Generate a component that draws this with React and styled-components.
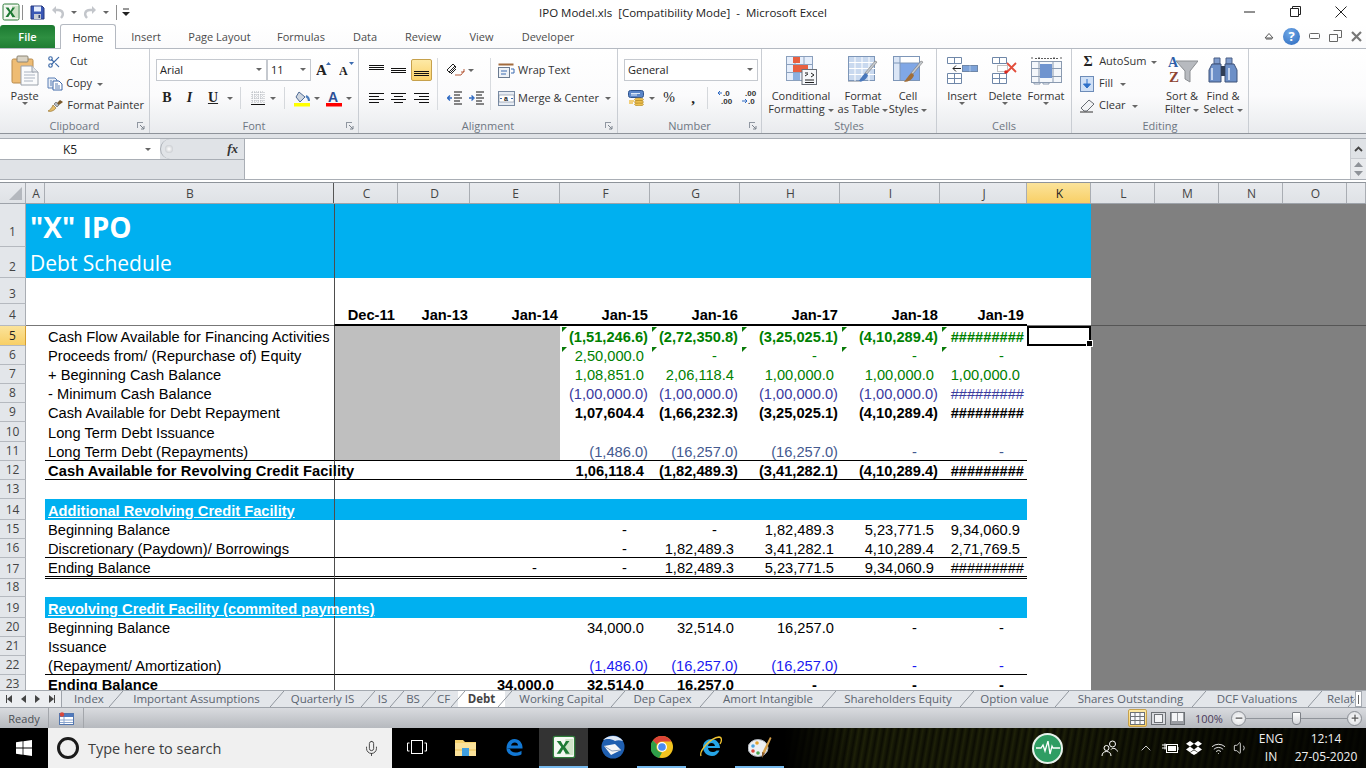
import React from 'react';
import styled, { createGlobalStyle } from 'styled-components';
import { Scissors, Mic, Volume1, Wifi, ChevronUp, Minus, Plus } from 'lucide-react';

const GlobalStyle = createGlobalStyle`
  html, body { margin: 0; padding: 0; background: #fff; }
  * { box-sizing: border-box; }
  svg { display: block; flex-shrink: 0; }
`;

const uiFont = `"Open Sans", "Noto Sans", sans-serif`;
const cellFont = `"Liberation Sans", Arial, sans-serif`;

const Page = styled.div`
  width: 1366px;
  height: 768px;
  overflow: hidden;
  display: flex;
  flex-direction: column;
  font-family: ${uiFont};
  font-size: 11px;
  color: #3c3c3c;
`;

/* title bar */
const TitleBar = styled.div`
  height: 24px;
  display: grid;
  grid-template-columns: 1fr auto 1fr;
  align-items: center;
  background: #fff;
`;
const Qat = styled.div`
  display: flex;
  align-items: center;
  padding-left: 2px;
`;
const QatSep = styled.div`
  width: 1px;
  height: 15px;
  background: #8e8e8e;
  margin: 0 ${({ $r }) => $r}px 0 ${({ $l }) => $l}px;
`;
const TitleText = styled.div`
  font-size: 11.5px;
  color: #222;
  white-space: pre;
`;
const WindowBtns = styled.div`
  display: flex;
  justify-content: flex-end;
  padding-right: 2px;
  color: #222;
`;
const WindowBtn = styled.div`
  width: 46px;
  display: flex;
  justify-content: center;
`;

/* ribbon tabs */
const TabRow = styled.div`
  height: 25px;
  display: flex;
  align-items: flex-end;
  background: linear-gradient(#fff, #fbfbfc);
  border-bottom: 1px solid #b4b9c1;
`;
const FileTab = styled.div`
  width: 55px;
  height: 23px;
  border-radius: 3px 3px 0 0;
  background: linear-gradient(#1c7a31, #2e8f41 55%, #1f7d33);
  color: #fff;
  font-weight: 600;
  display: flex;
  align-items: center;
  justify-content: center;
  margin-right: 5px;
`;
const RibbonTab = styled.div`
  height: 25px;
  width: ${({ $w }) => $w}px;
  display: flex;
  align-items: center;
  justify-content: center;
  color: ${({ $on }) => ($on ? '#333' : '#4c4c4c')};
  background: ${({ $on }) => ($on ? '#fff' : 'transparent')};
  border: 1px solid ${({ $on }) => ($on ? '#b4b9c1' : 'transparent')};
  border-bottom: 0;
  border-radius: 3px 3px 0 0;
  margin-bottom: ${({ $on }) => ($on ? '-1px' : '0')};
`;
const TabRight = styled.div`
  margin-left: auto;
  height: 24px;
  display: flex;
  align-items: center;
  gap: 9px;
  padding-right: 4px;
  color: #5a6169;
`;
const HelpDot = styled.div`
  width: 17px;
  height: 17px;
  border-radius: 50%;
  background: radial-gradient(circle at 40% 30%, #6fa7e6, #2a68bd);
  color: #fff;
  font-weight: 700;
  font-size: 13px;
  line-height: 17px;
  text-align: center;
`;

/* ribbon */
const Ribbon = styled.div`
  height: 85px;
  display: flex;
  background: linear-gradient(#ffffff, #fbfbfc 55%, #e9ebee);
  border-bottom: 1px solid #8e939a;
`;
const Group = styled.div`
  position: relative;
  width: ${({ $w }) => $w}px;
  border-right: 1px solid #c9cdd3;
  display: flex;
  flex-direction: column;
`;
const GroupBody = styled.div`
  height: 69px;
  display: flex;
  padding-left: ${({ $pl }) => $pl || 0}px;
`;
const GroupLabel = styled.div`
  height: 15px;
  line-height: 15px;
  text-align: center;
  color: #6d7682;
`;
const Launcher = styled.div`
  position: absolute;
  right: 4px;
  bottom: 3px;
`;
const BigBtn = styled.div`
  width: ${({ $w }) => $w}px;
  display: flex;
  flex-direction: column;
  align-items: center;
  padding-top: 4px;
  line-height: 13px;
  text-align: center;
  color: #333;
  white-space: nowrap;
`;
const BigIcon = styled.div`
  height: 34px;
  display: flex;
  align-items: center;
  justify-content: center;
  margin-bottom: 2px;
`;
const SmallCol = styled.div`
  width: ${({ $w }) => $w}px;
  margin-left: ${({ $ml }) => $ml || 0}px;
  padding-top: 2px;
  display: flex;
  flex-direction: column;
`;
const SmallBtn = styled.div`
  height: 22px;
  display: flex;
  align-items: center;
  gap: ${({ $gap }) => $gap ?? 4}px;
  color: #333;
  white-space: nowrap;
  line-height: 20px;
`;
const BtnText = styled.span`
  position: relative;
  top: -1px;
`;
const Caret = styled.span`
  display: inline-block;
  width: 0;
  height: 0;
  border-left: 3px solid transparent;
  border-right: 3px solid transparent;
  border-top: 3px solid #666;
  margin-left: ${({ $ml }) => $ml || 0}px;
  vertical-align: middle;
`;
const CaretBox = styled.div`
  width: ${({ $w }) => $w || 8}px;
  display: flex;
  justify-content: center;
`;
const Stack = styled.div`
  padding-top: 9px;
  display: flex;
  flex-direction: column;
  gap: 4px;
`;
const ToolRow = styled.div`
  height: 24px;
  display: flex;
  align-items: center;
`;
const Tool = styled.div`
  width: ${({ $w }) => $w}px;
  height: 22px;
  margin-left: ${({ $ml }) => $ml || 0}px;
  display: flex;
  align-items: center;
  justify-content: center;
  color: #222;
  border-radius: 2px;
  ${({ $on }) => $on && `
    border: 1px solid #c6a14c;
    background: linear-gradient(#fde9a6, #fbd26a);
  `}
`;
const Letter = styled.span`
  font-family: "Liberation Serif", serif;
  font-size: ${({ $s }) => $s || 13}px;
  font-weight: ${({ $b }) => ($b ? 700 : 400)};
  font-style: ${({ $i }) => ($i ? 'italic' : 'normal')};
  text-decoration: ${({ $u }) => ($u ? 'underline' : 'none')};
  color: #222;
`;
const RowSep = styled.div`
  width: 1px;
  height: 22px;
  background: #d5d8dc;
  margin: 0 ${({ $r }) => $r || 0}px 0 ${({ $l }) => $l || 0}px;
`;
const FullSep = styled.div`
  width: 1px;
  height: 52px;
  margin: 9px ${({ $r }) => $r || 0}px 0 ${({ $l }) => $l || 0}px;
  background: #d8dbdf;
`;
const Select = styled.div`
  width: ${({ $w }) => $w}px;
  height: 22px;
  border: 1px solid #c5c9cf;
  background: #fff;
  display: flex;
  align-items: center;
  justify-content: space-between;
  padding: 0 4px 2px 3px;
  color: #222;
`;
const TextBtn = styled.div`
  display: flex;
  align-items: center;
  gap: 3px;
  color: #333;
  white-space: nowrap;
`;

const RibbonGap = styled.div`
  height: 4px;
  background: #dfe2e6;
`;

/* formula bar */
const FormulaBar = styled.div`
  height: 45px;
  display: flex;
  flex-direction: column;
  border-top: 1px solid #a9aeb5;
  background: #fff;
`;
const FormulaMain = styled.div`
  height: 40px;
  display: flex;
`;
const NamePanel = styled.div`
  width: 245px;
  border-right: 1px solid #a9aeb5;
  display: flex;
  flex-direction: column;
  background: #e0e3e7;
`;
const NameTop = styled.div`
  height: 21px;
  display: flex;
  border-bottom: 1px solid #a9aeb5;
`;
const NameBox = styled.div`
  width: 160px;
  background: #fff;
  display: flex;
  align-items: center;
  font-size: 12px;
  color: #222;
  padding: 0 9px 0 63px;
  justify-content: space-between;
`;
const Grip = styled.div`
  flex: 1;
  display: flex;
  align-items: center;
  justify-content: space-between;
  padding: 0 6px 0 4px;
  border-left: 1px solid #a9aeb5;
  border-radius: 10px 0 0 10px;
  font-family: "Liberation Serif", serif;
  font-style: italic;
  font-weight: 700;
  font-size: 13px;
  color: #333;
`;
const GripDot = styled.div`
  width: 8px;
  height: 8px;
  border-radius: 50%;
  background: radial-gradient(#fff, #b8bcc2);
`;
const FormulaInput = styled.div`
  flex: 1;
  background: #fff;
`;
const FormulaScroll = styled.div`
  width: 16px;
  display: flex;
  flex-direction: column;
  border-left: 1px solid #c9ccd1;
  background: #e8eaed;
`;
const ScrollTop = styled.div`
  height: 20px;
  display: flex;
  align-items: center;
  justify-content: center;
  background: #dfe2e6;
  border-bottom: 1px solid #c9ccd1;
`;
const ScrollPair = styled.div`
  flex: 1;
  display: flex;
  flex-direction: column;
  align-items: center;
  justify-content: center;
  gap: 4px;
`;
const FormulaEdge = styled.div`
  height: 4px;
  border-top: 1px solid #a9aeb5;
  border-bottom: 1px solid #8e939a;
  background: #fff;
`;

/* column headers */
const ColHeaders = styled.div`
  height: 21px;
  display: flex;
  border-bottom: 1px solid #9ea3aa;
`;
const ColHead = styled.div`
  width: ${({ $w }) => $w}px;
  ${({ $fill }) => $fill && 'flex: 1;'}
  height: 100%;
  display: flex;
  align-items: center;
  justify-content: center;
  padding-left: 2px;
  font-size: 12px;
  color: ${({ $on }) => ($on ? '#222' : '#444')};
  background: ${({ $on }) => ($on ? 'linear-gradient(#fbe39a, #f8cf66)' : 'linear-gradient(#e8eaee, #dfe2e6)')};
  border-right: 1px solid ${({ $dark }) => ($dark ? '#555' : '#a9adb3')};
`;
const Corner = styled(ColHead)`
  justify-content: flex-end;
  align-items: flex-end;
  padding: 0 3px 3px 0;
`;

/* sheet */
const Sheet = styled.div`
  height: 486px;
  overflow: hidden;
`;
const SheetRow = styled.div`
  height: ${({ $h }) => $h}px;
  display: flex;
`;
const RowHead = styled.div`
  width: 26px;
  display: flex;
  align-items: flex-end;
  justify-content: center;
  padding-bottom: ${({ $pb }) => $pb ?? 2}px;
  font-size: 12px;
  line-height: 15px;
  color: ${({ $on }) => ($on ? '#222' : '#444')};
  background: ${({ $on }) => ($on ? 'linear-gradient(#fbe39a, #f8cf66)' : '#e3e6ea')};
  border-right: 1px solid ${({ $on }) => ($on ? '#d59d2f' : '#a9adb3')};
  border-bottom: 1px solid #b5b9bf;
`;
const Cell = styled.div`
  position: relative;
  width: ${({ $w }) => $w}px;
  display: flex;
  align-items: flex-end;
  justify-content: ${({ $left }) => ($left ? 'flex-start' : 'flex-end')};
  padding: 0 ${({ $pr }) => $pr || 0}px ${({ $pb }) => $pb ?? 1}px ${({ $pl }) => $pl || 0}px;
  white-space: nowrap;
  font-family: ${cellFont};
  font-size: 14.67px;
  line-height: 16px;
  letter-spacing: ${({ $ls }) => $ls || 0}px;
  font-weight: ${({ $b }) => ($b ? 700 : 400)};
  color: ${({ $c }) => $c || '#000'};
  background: ${({ $bg }) => $bg || 'transparent'};
  border-left: ${({ $freeze }) => ($freeze ? '1px solid #4d4d4d' : '0')};
  border-bottom: ${({ $line }) => $line || '0'};
  z-index: ${({ $over }) => ($over ? 1 : 0)};
  ${({ $sel }) => $sel && `
    border: 2px solid #000;
    &::after {
      content: '';
      position: absolute;
      right: -4px;
      bottom: -3px;
      width: 5px;
      height: 5px;
      background: #000;
      border: 1px solid #fff;
    }
  `}
  ${({ $flag }) => $flag && `
    &::before {
      content: '';
      position: absolute;
      left: 2px;
      top: 1px;
      border-top: 5px solid #0a7a0a;
      border-right: 5px solid transparent;
    }
  `}
`;
const BlueTitle = styled.div`
  font-family: ${uiFont};
  color: #fff;
  font-size: ${({ $s }) => $s}px;
  font-weight: ${({ $b }) => ($b ? 700 : 400)};
  line-height: 1;
  padding-left: ${({ $pl }) => $pl}px;
  padding-bottom: ${({ $pb }) => $pb}px;
`;
const BarTitle = styled.span`
  color: #fff;
  font-weight: 700;
  text-decoration: underline;
`;
const DeadArea = styled.div`
  flex: 1;
  background: #808080;
  border-bottom: ${({ $line }) => $line || '0'};
`;

/* sheet tabs */
const SheetTabs = styled.div`
  height: 18px;
  display: flex;
  overflow: hidden;
  border-top: 1px solid #a4a9b0;
  border-bottom: 1px solid #9ea3aa;
  background: #e3e6ea;
`;
const TabNav = styled.div`
  width: 62px;
  display: flex;
  align-items: center;
  justify-content: space-around;
  padding: 0 2px;
  border-right: 1px solid #9ea3aa;
  background: #eceef1;
`;
const NavArrow = styled.div`
  width: 0;
  height: 0;
  border-top: 4px solid transparent;
  border-bottom: 4px solid transparent;
  ${({ $right }) => ($right ? 'border-left: 5px solid #444;' : 'border-right: 5px solid #444;')}
`;
const NavEnd = styled(NavArrow)`
  ${({ $right }) => ($right
    ? 'box-shadow: 1px 0 0 0 #444;'
    : 'box-shadow: -1px 0 0 0 #444;')}
`;
const SheetTab = styled.div`
  position: relative;
  width: ${({ $w }) => $w}px;
  display: flex;
  align-items: center;
  justify-content: ${({ $pl }) => ($pl ? 'flex-start' : 'center')};
  padding: 0 0 2px ${({ $pl }) => $pl || 0}px;
  white-space: nowrap;
  font-size: 11.5px;
  font-weight: ${({ $on }) => ($on ? 700 : 400)};
  color: ${({ $on }) => ($on ? '#444' : '#5b6470')};
  background: ${({ $on }) => ($on ? '#fff' : 'transparent')};
  &::after {
    content: '';
    position: absolute;
    right: -7px;
    top: 0;
    bottom: 0;
    width: 14px;
    z-index: 1;
    background: linear-gradient(to top left, transparent calc(50% - 0.7px), #8b9199, transparent calc(50% + 0.7px));
  }
`;
const TabEnd = styled.div`
  width: 7px;
  background: #fff;
  border: 1px solid #a4a9b0;
  display: flex;
  align-items: center;
  justify-content: center;
  z-index: 2;
  &::before {
    content: '';
    width: 1px;
    height: 9px;
    background: #666;
  }
`;
const TabRest = styled.div`
  flex: 1;
  background: #d8dbe0;
`;

/* status bar */
const StatusBar = styled.div`
  height: 20px;
  display: flex;
  align-items: center;
  background: linear-gradient(#d9dbdf, #b6b9be);
  color: #4b4f55;
  font-size: 11px;
`;
const StatusItem = styled.div`
  height: 100%;
  width: ${({ $w }) => $w}px;
  display: flex;
  align-items: center;
  justify-content: center;
  border-right: 1px solid #a3a6ab;
`;
const StatusRight = styled.div`
  margin-left: auto;
  display: flex;
  align-items: center;
  height: 100%;
`;
const ViewBtn = styled.div`
  width: ${({ $w }) => $w}px;
  height: 18px;
  display: flex;
  align-items: center;
  justify-content: center;
  border-radius: 2px;
  ${({ $on }) => $on && `
    border: 1px solid #c6a14c;
    background: linear-gradient(#fde9a6, #fbd26a);
  `}
`;
const ZoomText = styled.div`
  width: 39px;
  margin-left: 7px;
  padding-left: 3px;
  color: #4a3a5a;
`;
const ZoomRound = styled.div`
  width: 15px;
  height: 15px;
  border-radius: 50%;
  border: 1px solid #8b8f95;
  background: radial-gradient(#fff, #d5d7db);
  display: flex;
  align-items: center;
  justify-content: center;
  color: #555;
`;
const ZoomTrack = styled.div`
  position: relative;
  width: 101px;
  height: 1px;
  background: #90949a;
`;
const ZoomThumb = styled.div`
  position: absolute;
  left: 46px;
  top: -6px;
  width: 9px;
  height: 13px;
  background: linear-gradient(#fff, #d4d6da);
  border: 1px solid #7d8187;
  border-radius: 1px 1px 4px 4px;
`;
const StatusEnd = styled.div`
  width: 4px;
`;

/* taskbar */
const Taskbar = styled.div`
  height: 40px;
  display: flex;
  align-items: center;
  color: #fff;
  background-color: #000;
  background-image:
    linear-gradient(90deg, #000, rgba(0, 0, 0, 0) 12%, rgba(0, 0, 0, 0) 45%, rgba(0, 0, 0, 0.55) 75%, rgba(0, 0, 0, 0.8)),
    repeating-linear-gradient(100deg, #0b0c03 0, #1e2108 3px, #0b0c03 7px);
  background-size: 581px 100%;
  background-position: right top;
  background-repeat: no-repeat;
`;
const StartBtn = styled.div`
  width: 48px;
  display: flex;
  justify-content: center;
`;
const SearchBox = styled.div`
  width: 344px;
  height: 40px;
  background: #f0f0f0;
  color: #2f2f2f;
  display: flex;
  align-items: center;
  padding: 0 12px 0 9px;
  font-size: 14.5px;
`;
const CortanaRing = styled.div`
  width: 22px;
  height: 22px;
  border-radius: 50%;
  border: 3px solid #1b1b1b;
  margin-right: 9px;
`;
const SearchText = styled.div`
  flex: 1;
  color: #3d3d3d;
`;
const TaskBtn = styled.div`
  width: ${({ $w }) => $w || 49}px;
  height: 40px;
  display: flex;
  align-items: center;
  justify-content: center;
  background: ${({ $on }) => ($on ? '#333' : 'transparent')};
  border-bottom: 2px solid ${({ $under }) => ($under ? '#76b9ed' : 'transparent')};
`;
const Tray = styled.div`
  margin-left: auto;
  display: flex;
  align-items: center;
  height: 40px;
`;
const TrayIcon = styled.div`
  width: ${({ $w }) => $w}px;
  display: flex;
  justify-content: center;
`;
const TrayText = styled.div`
  width: ${({ $w }) => $w}px;
  font-size: 12px;
  line-height: 18px;
  text-align: center;
  color: #f2f2f2;
`;
const PulseDot = styled.div`
  width: 31px;
  height: 31px;
  border-radius: 50%;
  background: #2f9d63;
  border: 2px solid #e8f3ec;
  display: flex;
  align-items: center;
  justify-content: center;
  margin: 0 35px 0 0;
`;

/* icons */
const Svg = ({ w, h, children }) => (
  <svg width={w} height={h} viewBox={`0 0 ${w} ${h}`} fill="none">{children}</svg>
);

const ExcelLogo = ({ s = 18 }) => (
  <svg width={s} height={s} viewBox="0 0 18 18" fill="none">
    <rect x="1" y="1" width="16" height="16" rx="1.5" fill="#f4f8f2" stroke="#2f7d3a" />
    <rect x="10" y="3" width="6" height="12" fill="#cfe3c8" />
    <path d="M3.5 4.5h3l2 3.4 2-3.4h2.6L9.8 9l3.5 5h-3L8.3 10.6 6.3 14H3.5l3.5-5z" fill="#1f7a35" />
  </svg>
);
const SaveIcon = () => (
  <Svg w={15} h={15}>
    <path d="M1 1h11l2 2v11H1z" fill="#3a58b5" stroke="#26397f" />
    <rect x="4" y="1.5" width="7" height="5" fill="#e6eefc" />
    <rect x="4" y="9" width="7" height="5" fill="#c8cdd6" />
    <rect x="8.5" y="10" width="1.6" height="3" fill="#36456e" />
  </Svg>
);
const UndoIcon = ({ flip }) => (
  <svg width="14" height="14" viewBox="0 0 14 14" fill="none" transform={flip ? 'scale(-1 1)' : undefined}>
    <path d="M10 13c3-3 2.5-8-3-8H4" stroke="#c3c6cb" strokeWidth="2.4" />
    <path d="M5 1 1 5l4 4z" fill="#c3c6cb" />
  </svg>
);
const ClipboardIcon = () => (
  <Svg w={28} h={31}>
    <rect x="1" y="4" width="21" height="24" rx="1.5" fill="#eebc74" stroke="#b88a4c" />
    <rect x="6" y="1" width="11" height="6" rx="1" fill="#d9d3c5" stroke="#8c8574" />
    <path d="M10 11h11l6 6v13H10z" fill="#fafbfc" stroke="#9aa1ab" />
    <path d="M13 17h10M13 20h11M13 23h11M13 26h9" stroke="#aab3c0" />
    <path d="M21 11v6h6" fill="#e3e7ec" stroke="#9aa1ab" />
  </Svg>
);
const CopyIcon = () => (
  <Svg w={16} h={14}>
    <path d="M1 1h7l2 2v8H1z" fill="#e9eff8" stroke="#5a7eb4" />
    <path d="M6 4h6l3 3v6H6z" fill="#fff" stroke="#3f68a8" />
    <path d="M8 7h3M8 9h5M8 11h5M3 4h2M3 6h2M3 8h2" stroke="#5a7eb4" />
  </Svg>
);
const PainterIcon = () => (
  <Svg w={17} h={14}>
    <path d="M1 12c2 1 6 0 8-3L6 6C5 9 3 11 1 12z" fill="#e6bd6b" stroke="#9a7631" strokeWidth=".7" />
    <path d="M7 5l3 3 2-2-3-3z" fill="#b3b8bf" stroke="#666" strokeWidth=".7" />
    <path d="M10 4l3-3 3 2-4 3z" fill="#7a5a2c" />
  </Svg>
);
const GrowA = ({ s, up }) => (
  <Svg w={16} h={18}>
    <text x="0" y="14" fontFamily="Liberation Serif" fontWeight="700" fontSize={s} fill="#222">A</text>
    <path d={up ? 'M10 4l2.5-3L15 4z' : 'M10 1l2.5 3L15 1z'} fill="#3b6bb0" />
  </Svg>
);
const Lines = ({ rows, c = '#111' }) => (
  <Svg w={15} h={15}>
    {rows.map(([x1, y, x2], i) => (
      <rect key={i} x={x1} y={y} width={x2 - x1} height="1" fill={c} />
    ))}
  </Svg>
);
const BorderIcon = () => (
  <Svg w={14} h={14}>
    <path d="M1 1h12v12M7 1v12M1 7h12M1 1v12M4 1v12M10 1v12M1 4h12M1 10h12" stroke="#b1b5bb" strokeDasharray="1 1" />
    <rect x="0" y="13" width="14" height="1" fill="#111" />
  </Svg>
);
const FillIcon = () => (
  <Svg w={17} h={17}>
    <path d="M5 2l6 5-5 5-4-5z" fill="#cfd6df" stroke="#4f6a94" />
    <path d="M12 6c2 1 3 3 3 5" stroke="#4a7bbb" strokeWidth="2" />
    <rect x="0" y="13" width="16" height="3.5" fill="#ffff00" />
  </Svg>
);
const ColorA = () => (
  <Svg w={16} h={17}>
    <text x="2" y="12" fontFamily="Liberation Sans" fontWeight="700" fontSize="14" fill="#2d4f96">A</text>
    <rect x="0" y="13" width="16" height="3.5" fill="#ff0000" />
  </Svg>
);
const OrientIcon = () => (
  <Svg w={20} h={14}>
    <path d="M1 7l6-6 3 3-6 6zM3 9l6-6M5 11l5-5" stroke="#222" />
    <path d="M9 12h6l3-4" stroke="#b65d3c" />
    <path d="M18 6v3h-3" stroke="#b65d3c" />
  </Svg>
);
const WrapIcon = () => (
  <Svg w={17} h={15}>
    <rect x=".5" y=".5" width="15" height="2" fill="#a26a3c" />
    <rect x=".5" y="4.5" width="11" height="10" fill="#eef2f7" stroke="#6a7a90" />
    <path d="M3 8h6M3 11h5M13 6h3v4h-3" stroke="#3b6bb0" />
  </Svg>
);
const MergeIcon = () => (
  <Svg w={17} h={15}>
    <rect x=".5" y=".5" width="16" height="14" fill="#e8edf4" stroke="#7a8ba3" />
    <rect x="1" y="4" width="15" height="7" fill="#fff" stroke="#5d6f88" strokeWidth=".5" />
    <text x="6" y="10" fontFamily="Liberation Sans" fontSize="7" fontWeight="700" fill="#222">a</text>
    <path d="M2 7.5h2M13 7.5h2" stroke="#3b6bb0" />
  </Svg>
);
const IndentIcon = ({ rev }) => (
  <Svg w={16} h={14}>
    <path d="M7 1h8M7 4h6M7 7h8M7 10h6M7 13h8" stroke="#111" />
    {rev
      ? <path d="M5 7H1M3 4.5 0.5 7 3 9.5" stroke="#2f6ac2" strokeWidth="1.4" />
      : <path d="M0 7h4M2.5 4.5 5 7 2.5 9.5" stroke="#2f6ac2" strokeWidth="1.4" />}
  </Svg>
);
const CurrencyIcon = () => (
  <Svg w={17} h={16}>
    <rect x=".5" y=".5" width="15" height="7" rx="2" fill="#5a85c8" stroke="#2f548f" />
    <path d="M3 3.5h9M3 5h6" stroke="#dbe8f8" />
    <ellipse cx="11" cy="9.5" rx="4.5" ry="1.6" fill="#efc14f" stroke="#a8801f" strokeWidth=".6" />
    <ellipse cx="11" cy="12" rx="4.5" ry="1.6" fill="#efc14f" stroke="#a8801f" strokeWidth=".6" />
    <ellipse cx="11" cy="14.4" rx="4.5" ry="1.4" fill="#efc14f" stroke="#a8801f" strokeWidth=".6" />
    <path d="M1 11h5M1 13h4" stroke="#efc14f" strokeWidth="1.4" />
  </Svg>
);
const DecimalIcon = ({ inc }) => (
  <Svg w={17} h={18}>
    <text x={inc ? 5 : 3} y="7" fontFamily="Liberation Sans" fontWeight="700" fontSize="8" fill="#333">{inc ? '.0' : '.00'}</text>
    <text x={inc ? 3 : 6} y="15" fontFamily="Liberation Sans" fontWeight="700" fontSize="8" fill="#333">{inc ? '.00' : '.0'}</text>
    <path d={inc ? 'M4 4H0M2 2 0 4l2 2' : 'M0 12h5M3 10l2 2-2 2'} stroke="#2f6ac2" />
  </Svg>
);
const launcher = (
  <Svg w={8} h={8}>
    <path d="M0 .5h6M.5 0v6" stroke="#9097a1" />
    <path d="M3 3l4 4M7 4v3H4" stroke="#7b828c" />
  </Svg>
);
const CondIcon = () => (
  <Svg w={31} h={29}>
    <rect x=".5" y=".5" width="26" height="24" fill="#e6eefb" stroke="#8ba0bd" />
    <path d="M9 1v24M18 1v24M1 8.5h26M1 16.5h26" stroke="#8ba0bd" />
    <rect x="7" y="1" width="7" height="6" fill="#e85f3f" />
    <rect x="7" y="9" width="15" height="7" fill="#e85f3f" />
    <rect x="7" y="17" width="7" height="7" fill="#8cb0e0" />
    <rect x="16" y="13.5" width="14.5" height="15" fill="#f6f8fb" stroke="#6a6f78" />
    <path d="M19 17h3M25 17l3 2-3 2M19 20l3-2M19 24h9M19 26.5h9" stroke="#222" />
  </Svg>
);
const TableIcon = () => (
  <Svg w={31} h={29}>
    <rect x=".5" y=".5" width="26" height="24" fill="#c9d9ef" stroke="#7d96b8" />
    <path d="M7 1v24M14 1v24M21 1v24M1 6.5h26M1 12.5h26M1 18.5h26" stroke="#fff" />
    <path d="M29 6 19 18l-3 2 1-3L27 5z" fill="#c5c9ce" stroke="#777" strokeWidth=".6" />
    <path d="M18 17c-4 2-5 6-8 9 5 0 9-3 10-7z" fill="#4a78bb" />
    <rect x="0" y="25" width="12" height="1" fill="#b8bdc4" />
  </Svg>
);
const CellStyleIcon = () => (
  <Svg w={31} h={29}>
    <rect x=".5" y=".5" width="26" height="24" fill="#fff" stroke="#7d96b8" />
    <rect x="1" y="1" width="6" height="23" fill="#dbe6f6" />
    <rect x="7" y="7" width="19" height="17" fill="#80a7e6" />
    <path d="M1 7h26M7 1v24" stroke="#7d96b8" />
    <path d="M30 6 20 18l-3 2 1-3L28 5z" fill="#c5c9ce" stroke="#777" strokeWidth=".6" />
    <path d="M19 17c-4 2-5 6-8 9 5 0 9-3 10-7z" fill="#a16e38" />
  </Svg>
);
const InsertIcon = () => (
  <Svg w={31} h={27}>
    <path d="M.5.5h14v6H.5zM7.5.5v6" fill="#fff" stroke="#6f87a8" />
    <path d="M.5 16.5h14v10H.5zM7.5 16.5v10M.5 21.5h14" fill="#fff" stroke="#6f87a8" />
    <rect x="15.5" y="8.5" width="15" height="6" fill="#7da2d8" stroke="#6f87a8" />
    <path d="M23 8.5v6" stroke="#b8cdea" />
    <path d="M6 11.5h8M9 8.5l-3 3 3 3" stroke="#222" />
  </Svg>
);
const DeleteIcon = () => (
  <Svg w={26} h={27}>
    <path d="M.5.5h14v6H.5zM7.5.5v6" fill="#fff" stroke="#6f87a8" />
    <path d="M.5 16.5h14v10H.5zM7.5 16.5v10M.5 21.5h14" fill="#fff" stroke="#6f87a8" />
    <rect x="5.5" y="8.5" width="10" height="6" fill="#fff" stroke="#888" strokeDasharray="1 1" />
    <path d="M15 6l9 9M24 6l-9 9" stroke="#e24d3c" strokeWidth="1.8" />
    <circle cx="14" cy="15" r="1.8" fill="#d9261c" />
  </Svg>
);
const FormatIcon = () => (
  <Svg w={31} h={29}>
    <path d="M1 1v3M30 1v3M4 2.5h23M8 1v3M23 1v3" stroke="#333" strokeWidth=".8" strokeDasharray="2 1" />
    <rect x=".5" y="5.5" width="30" height="21" fill="#f4f7fb" stroke="#8a9ab0" />
    <path d="M8 6v20M22 6v20M1 12.5h29M1 20.5h29" stroke="#8a9ab0" />
    <rect x="9" y="8" width="12" height="14" fill="#6f94cf" />
    <path d="M3 26v2h6v-2M12 26v2h6v-2" stroke="#8a9ab0" />
  </Svg>
);
const FillDown = () => (
  <Svg w={14} h={16}>
    <rect x=".5" y=".5" width="13" height="15" fill="#cfe0f6" stroke="#6d8cb8" />
    <path d="M7 3v8M3.5 8 7 12l3.5-4z" fill="#2e71c9" stroke="#2e71c9" />
  </Svg>
);
const EraserIcon = () => (
  <Svg w={15} h={14}>
    <path d="M9 1l5 4-7 7H4L1 9z" fill="#f2f3f5" stroke="#666b72" />
    <path d="M0 13h13" stroke="#333" />
  </Svg>
);
const SortIcon = () => (
  <Svg w={31} h={31}>
    <path d="M9 6h22l-8 10v11l-5-3v-8z" fill="#b7babf" stroke="#8b8e92" />
    <text x="1" y="12" fontFamily="Liberation Serif" fontWeight="700" fontSize="14" fill="#2f5fa8">A</text>
    <text x="2" y="27" fontFamily="Liberation Serif" fontWeight="700" fontSize="15" fill="#8f4432">Z</text>
  </Svg>
);
const BinocularsIcon = () => (
  <Svg w={30} h={26}>
    <path d="M6 1h6v6H6zM18 1h6v6h-6z" fill="#7f9ccd" stroke="#4a5f85" />
    <path d="M4 7h9v18H1V13zM17 7h9l3 6v12H17z" fill="#6c8fc7" stroke="#3f5379" />
    <path d="M13 9h4v10h-4z" fill="#2f3d55" />
    <path d="M4 11v12M21 11v12" stroke="#c5d5ee" strokeWidth="2" />
  </Svg>
);
const NormalView = () => (
  <Svg w={15} h={13}>
    <rect x=".5" y=".5" width="14" height="12" fill="#f8f9fb" stroke="#6d7176" />
    <path d="M5 1v11M10 1v11M1 4.5h13M1 8.5h13" stroke="#6d7176" />
  </Svg>
);
const LayoutView = () => (
  <Svg w={15} h={13}>
    <rect x=".5" y=".5" width="14" height="12" fill="#d9dbdf" stroke="#6d7176" />
    <rect x="3.5" y="2.5" width="8" height="8" fill="#f4f5f7" stroke="#6d7176" />
  </Svg>
);
const BreakView = () => (
  <Svg w={15} h={13}>
    <rect x=".5" y=".5" width="14" height="12" fill="#9a9da2" stroke="#6d7176" />
    <rect x="2" y="1" width="5" height="8" fill="#f4f5f7" />
    <rect x="8" y="1" width="5" height="8" fill="#f4f5f7" />
  </Svg>
);
const MacroIcon = () => (
  <Svg w={15} h={13}>
    <rect x=".5" y="1.5" width="14" height="11" fill="#fff" stroke="#5276ae" />
    <rect x="1" y="2" width="13" height="3" fill="#4f79bd" />
    <path d="M5 5v7M1 8h13M1 10.5h13" stroke="#8aa5cf" />
    <circle cx="3" cy="2.5" r="2.2" fill="#d8463b" />
  </Svg>
);
const WindowsLogo = () => (
  <Svg w={16} h={16}>
    <path d="M0 2.2 6.6 1.3v6.2H0zM7.4 1.2 16 0v7.5H7.4zM0 8.5h6.6v6.2L0 13.8zM7.4 8.5H16V16l-8.6-1.2z" fill="#fff" />
  </Svg>
);
const TaskView = () => (
  <Svg w={20} h={14}>
    <rect x="4.5" y=".5" width="11" height="13" stroke="#fff" />
    <path d="M2.5 3H.5v8h2M17.5 3h2v8h-2" stroke="#fff" />
  </Svg>
);
const FolderIcon = () => (
  <Svg w={21} h={18}>
    <path d="M0 2h8l2 2h11v14H0z" fill="#f6d26f" />
    <path d="M0 5h21v13H0z" fill="#fbe29a" />
    <path d="M7 10h7v8H7z" fill="#3f9fe0" />
    <path d="M0 12h7M14 12h7" stroke="#e8bf56" />
  </Svg>
);
const EdgeIcon = () => (
  <Svg w={20} h={20}>
    <path d="M1.5 11.5h16c.4-5-3-9.5-8-9.5-4.7 0-8 4-8 9.5 0 4.500 4 7.500 8.500 7.500 3 0 5-.7 6.500-1.700v-3.600c-1.500 1-3.500 1.800-6 1.800-2.700 0-5-1.400-5.500-3.500zm4.500-3c.5-2 2-3 3.800-3s3.200 1 3.200 3z" fill="#1278d4" fillRule="evenodd" />
  </Svg>
);
const MailBird = () => (
  <Svg w={24} h={24}>
    <circle cx="12" cy="12" r="11.5" fill="#1f5fb0" />
    <path d="M2 5c5-5 15-6 20 1-3-1-6-1-8 0-5-3-9-2-12-1z" fill="#dfe8f5" />
    <path d="M3 11l11-2 6 6-10 5z" fill="#f5f6f8" />
    <path d="M3 11l8 5 9-1" stroke="#8ba0bd" />
  </Svg>
);
const ChromeIcon = () => (
  <Svg w={22} h={22}>
    <circle cx="11" cy="11" r="11" fill="#f2c31f" />
    <path d="M11 0a11 11 0 0 1 9.500 5.500H11a5.500 5.500 0 0 0-5 3L1.800 4.500A11 11 0 0 1 11 0z" fill="#dc4437" />
    <path d="M1.800 4.500 6 8.500a5.500 5.500 0 0 0 5 8L8 22A11 11 0 0 1 1.800 4.500z" fill="#2f9e48" />
    <circle cx="11" cy="11" r="5" fill="#fff" />
    <circle cx="11" cy="11" r="3.8" fill="#4a8bf0" />
  </Svg>
);
const IeIcon = () => (
  <Svg w={22} h={22}>
    <path d="M3 11c0-5 4-8 8.500-8S20 7 20 12H8c.3 2.500 2 4 4.500 4 1.500 0 3-.5 4-1.500h3C18 18 15.500 20 12 20c-5 0-9-4-9-9zm5-1h7c-.3-2-1.700-3-3.500-3S8.300 8 8 10z" fill="#26a5e6" fillRule="evenodd" />
    <path d="M1 20C-1 15 10 2 19 1c3 0 3 4 1 7" stroke="#f2c430" strokeWidth="1.3" />
  </Svg>
);
const PaletteIcon = () => (
  <Svg w={24} h={24}>
    <ellipse cx="10" cy="13" rx="10" ry="8.5" fill="#eceff3" stroke="#a9adb3" />
    <circle cx="5" cy="11" r="1.8" fill="#4aa3e0" />
    <circle cx="9" cy="8" r="1.8" fill="#e2a22f" />
    <circle cx="5" cy="16" r="1.8" fill="#d9463c" />
    <circle cx="10" cy="18" r="1.8" fill="#4ca652" />
    <path d="M14 18 22 2l1.500 1L17 18z" fill="#d6a04a" />
    <path d="M14 17l3 1-3 5z" fill="#8a5c2c" />
  </Svg>
);
const PeopleIcon = () => (
  <Svg w={18} h={17}>
    <circle cx="11.5" cy="4" r="3" stroke="#fff" />
    <circle cx="5.5" cy="8" r="2.5" stroke="#fff" />
    <path d="M1 16c0-3 2-4.500 4.500-4.500S10 13 10 16M10 9.500c1-1.500 5-2 6.500 2" stroke="#fff" />
  </Svg>
);
const PlugBattery = () => (
  <Svg w={17} h={13}>
    <rect x="4.5" y="2.5" width="11" height="8" stroke="#fff" />
    <rect x="6" y="4" width="8" height="5" fill="#fff" />
    <path d="M16 5v3" stroke="#fff" />
    <path d="M0 3h4M0 6h4M3 1.500v6" stroke="#fff" />
  </Svg>
);
const DropboxIcon = () => (
  <Svg w={16} h={14}>
    <path d="M4 0 8 2.800 4 5.600 0 2.800zM12 0l4 2.800-4 2.800L8 2.800zM4 5.600l4 2.800-4 2.800-4-2.800zM12 5.600l4 2.800-4 2.800-4-2.800zM4 11.700l4-2.500 4 2.500L8 14z" fill="#fff" />
  </Svg>
);
const Pulse = () => (
  <Svg w={24} h={14}>
    <path d="M0 7h5l2-3 2 6 3-10 2 13 2-8 1 2h7" stroke="#fff" strokeWidth="1.3" />
  </Svg>
);

/* data */
const ribbonTabs = [
  ['Home', 56, true], ['Insert', 60], ['Page Layout', 87], ['Formulas', 76], ['Data', 52],
  ['Review', 64], ['View', 53], ['Developer', 80],
];
const headers = [
  ['A', 19], ['B', 289, 'dark'], ['C', 64], ['D', 72], ['E', 90], ['F', 90], ['G', 90], ['H', 100],
  ['I', 100], ['J', 87], ['K', 64, 'on'], ['L', 64], ['M', 64], ['N', 64], ['O', 64],
];
const colNames = ['C', 'D', 'E', 'F', 'G', 'H', 'I', 'J', 'K'];
const widths = { C: 64, D: 72, E: 90, F: 90, G: 90, H: 100, I: 100, J: 87, K: 64 };
const dataCols = ['F', 'G', 'H', 'I', 'J'];
const HASH = '#########';
const GREEN = '#008000';
const PURPLE = '#3a3a9e';
const SLATE = '#44598f';
const BLUE = '#1a1af0';
const SKY = '#00b0f0';

const thin = '1px solid #000';
const dbl = '3px double #000';

const rows = [
  { n: 5, h: 20, label: 'Cash Flow Available for Financing Activities', grey: true, b: true, c: GREEN, flag: true, vals: ['(1,51,246.6)', '(2,72,350.8)', '(3,25,025.1)', '(4,10,289.4)', HASH] },
  { n: 6, h: 19, label: 'Proceeds from/ (Repurchase of) Equity', grey: true, c: GREEN, flag: true, vals: ['2,50,000.0', '-', '-', '-', '-'] },
  { n: 7, h: 19, label: '+ Beginning Cash Balance', grey: true, c: GREEN, vals: ['1,08,851.0', '2,06,118.4', '1,00,000.0', '1,00,000.0', '1,00,000.0'] },
  { n: 8, h: 19, label: '- Minimum Cash Balance', grey: true, c: PURPLE, vals: ['(1,00,000.0)', '(1,00,000.0)', '(1,00,000.0)', '(1,00,000.0)', HASH] },
  { n: 9, h: 19, label: 'Cash Available for Debt Repayment', grey: true, b: true, vals: ['1,07,604.4', '(1,66,232.3)', '(3,25,025.1)', '(4,10,289.4)', HASH] },
  { n: 10, h: 20, label: 'Long Term Debt Issuance', grey: true },
  { n: 11, h: 19, label: 'Long Term Debt (Repayments)', grey: true, c: SLATE, line: thin, vals: ['(1,486.0)', '(16,257.0)', '(16,257.0)', '-', '-'] },
  { n: 12, h: 19, label: 'Cash Available for Revolving Credit Facility', labelBold: true, ls: 0.1, b: true, line: thin, vals: ['1,06,118.4', '(1,82,489.3)', '(3,41,282.1)', '(4,10,289.4)', HASH] },
  { n: 13, h: 19 },
  { n: 14, h: 21, bar: 'Additional Revolving Credit Facility' },
  { n: 15, h: 19, label: 'Beginning Balance', vals: ['-', '-', '1,82,489.3', '5,23,771.5', '9,34,060.9'] },
  { n: 16, h: 19, label: 'Discretionary (Paydown)/ Borrowings', line: thin, vals: ['-', '1,82,489.3', '3,41,282.1', '4,10,289.4', '2,71,769.5'] },
  { n: 17, h: 21, label: 'Ending Balance', line: dbl, e: '-', vals: ['-', '1,82,489.3', '5,23,771.5', '9,34,060.9', HASH] },
  { n: 18, h: 18 },
  { n: 19, h: 21, bar: 'Revolving Credit Facility (commited payments)' },
  { n: 20, h: 19, label: 'Beginning Balance', vals: ['34,000.0', '32,514.0', '16,257.0', '-', '-'] },
  { n: 21, h: 19, label: 'Issuance' },
  { n: 22, h: 19, label: '(Repayment/ Amortization)', c: BLUE, line: thin, vals: ['(1,486.0)', '(16,257.0)', '(16,257.0)', '-', '-'] },
  { n: 23, h: 19, label: 'Ending Balance', labelBold: true, b: true, e: '34,000.0', vals: ['32,514.0', '16,257.0', '-', '-', '-'] },
];
const dates = { C: 'Dec-11', D: 'Jan-13', E: 'Jan-14', F: 'Jan-15', G: 'Jan-16', H: 'Jan-17', I: 'Jan-18', J: 'Jan-19' };

// right padding depends on the number format (accounting style)
const padFor = (v, col) => {
  if (v === HASH) return 3;
  if (v === '-') return 23;
  if (v.endsWith(')')) return 2;
  return col === 'J' ? 7 : 6;
};

const sheetTabs = [
  ['Index', 54], ['Important Assumptions', 161], ['Quarterly IS', 91], ['IS', 29], ['BS', 32], ['CF', 29],
  ['Debt', 47, true], ['Working Capital', 113], ['Dep Capex', 89], ['Amort Intangible', 122],
  ['Shareholders Equity', 138], ['Option value', 95], ['Shares Outstanding', 137], ['DCF Valuations', 116], ['Relat', 40, false, 12],
];

const DataRow = ({ row }) => {
  const { n, h, label, labelBold, ls, grey, b, c, flag, vals, line, bar, e } = row;
  const pb = line ? 0 : 1;
  return (
    <SheetRow $h={h}>
      <RowHead $on={n === 5}>{n}</RowHead>
      <Cell $w={19} />
      <Cell $w={289} $left $over $pl={3} $pb={pb} $b={labelBold || !!bar} $ls={ls} $line={line} $bg={bar ? SKY : undefined}>
        {bar ? <BarTitle>{bar}</BarTitle> : label}
      </Cell>
      {colNames.map((col) => {
        const i = dataCols.indexOf(col);
        let v = i >= 0 && vals ? vals[i] : '';
        if (col === 'E' && e) v = e;
        const isK = col === 'K';
        return (
          <Cell
            key={col}
            $w={widths[col]}
            $freeze={col === 'C'}
            $bg={bar && !isK ? SKY : grey && ['C', 'D', 'E'].includes(col) ? '#bfbfbf' : undefined}
            $line={isK ? undefined : line}
            $b={b}
            $c={c}
            $flag={flag && i >= 0}
            $sel={isK && n === 5}
            $pr={v ? padFor(v, col) : 0}
            $pb={pb}
          >
            {v}
          </Cell>
        );
      })}
      <DeadArea />
    </SheetRow>
  );
};

export default function App() {
  return (
    <Page>
      <GlobalStyle />
      <TitleBar>
        <Qat>
          <ExcelLogo />
          <QatSep $l={2} $r={7} />
          <SaveIcon />
          <Tool $w={26}><UndoIcon /></Tool>
          <Caret $ml={0} />
          <Tool $w={26}><UndoIcon flip /></Tool>
          <Caret />
          <QatSep $l={7} $r={5} />
          <Svg w={9} h={9}><path d="M1 1h6" stroke="#333" /><path d="M0 4h8L4 8z" fill="#222" /></Svg>
        </Qat>
        <TitleText>{'IPO Model.xls  [Compatibility Mode]  -  Microsoft Excel'}</TitleText>
        <WindowBtns>
          <WindowBtn><Svg w={11} h={11}><path d="M0 6h11" stroke="#222" /></Svg></WindowBtn>
          <WindowBtn><Svg w={11} h={11}><path d="M.5 2.500h8v8h-8zM2.500 2V.5h8v8H9" stroke="#222" /></Svg></WindowBtn>
          <WindowBtn><Svg w={12} h={12}><path d="M.5.5l11 11M11.500.5l-11 11" stroke="#222" /></Svg></WindowBtn>
        </WindowBtns>
      </TitleBar>

      <TabRow>
        <FileTab>File</FileTab>
        {ribbonTabs.map(([name, w, on]) => <RibbonTab key={name} $w={w} $on={on}>{name}</RibbonTab>)}
        <TabRight>
          <Svg w={10} h={8}><path d="M1 6l4-4.500L9 6zM2 7h6" stroke="#555" /></Svg>
          <HelpDot>?</HelpDot>
          <Svg w={11} h={6}><rect x=".5" y=".5" width="10" height="5" rx="1" stroke="#666" /></Svg>
          <Svg w={13} h={12}><path d="M4.500.5h8v7h-3M.5 4.500h8v7h-8z" stroke="#666" /></Svg>
          <Svg w={11} h={11}><path d="M1 1l9 9M10 1l-9 9" stroke="#777" strokeWidth="2.2" /></Svg>
        </TabRight>
      </TabRow>

      <Ribbon>
        <Group $w={150}>
          <GroupBody $pl={6}>
            <BigBtn $w={38}>
              <BigIcon><ClipboardIcon /></BigIcon>
              Paste
              <Caret $ml={0} />
            </BigBtn>
            <SmallCol $w={104} $ml={4}>
              <SmallBtn $gap={3}><Scissors size={14} color="#3d6aa8" /><BtnText>&nbsp;&nbsp;Cut</BtnText></SmallBtn>
              <SmallBtn $gap={3}><CopyIcon /><BtnText>Copy</BtnText><Caret $ml={2} /></SmallBtn>
              <SmallBtn $gap={3}><PainterIcon /><BtnText>Format Painter</BtnText></SmallBtn>
            </SmallCol>
          </GroupBody>
          <GroupLabel>Clipboard</GroupLabel>
          <Launcher>{launcher}</Launcher>
        </Group>

        <Group $w={209}>
          <GroupBody $pl={6}>
            <Stack>
              <ToolRow>
                <Select $w={111}>Arial<Caret /></Select>
                <Select $w={44}>11<Caret /></Select>
                <Tool $w={24} $ml={1}><GrowA s={15} up /></Tool>
                <Tool $w={22}><GrowA s={12} /></Tool>
              </ToolRow>
              <ToolRow>
                <Tool $w={22}><Letter $b $s={14}>B</Letter></Tool>
                <Tool $w={23}><Letter $i $b $s={14}>I</Letter></Tool>
                <Tool $w={24}><Letter $b $u $s={14}>U</Letter></Tool>
                <CaretBox $w={10}><Caret /></CaretBox>
                <RowSep $l={5} $r={6} />
                <Tool $w={22}><BorderIcon /></Tool>
                <CaretBox><Caret /></CaretBox>
                <RowSep $l={7} $r={6} />
                <Tool $w={22}><FillIcon /></Tool>
                <CaretBox><Caret /></CaretBox>
                <Tool $w={23} $ml={1}><ColorA /></Tool>
                <CaretBox><Caret /></CaretBox>
              </ToolRow>
            </Stack>
          </GroupBody>
          <GroupLabel>Font</GroupLabel>
          <Launcher>{launcher}</Launcher>
        </Group>

        <Group $w={259}>
          <GroupBody $pl={6}>
            <Stack>
              <ToolRow>
                <Tool $w={22}><Lines rows={[[0, 2, 15], [0, 4, 15], [0, 6, 15]]} /></Tool>
                <Tool $w={23}><Lines rows={[[0, 5, 15], [0, 7, 15], [0, 9, 15]]} /></Tool>
                <Tool $w={21} $ml={1} $on><Lines rows={[[0, 8, 15], [0, 10, 15], [0, 12, 15]]} /></Tool>
              </ToolRow>
              <ToolRow>
                <Tool $w={22}><Lines rows={[[0, 2, 15], [0, 5, 10], [0, 8, 15], [0, 11, 10]]} /></Tool>
                <Tool $w={23}><Lines rows={[[0, 2, 15], [3, 5, 12], [0, 8, 15], [3, 11, 12]]} /></Tool>
                <Tool $w={21} $ml={1}><Lines rows={[[0, 2, 15], [5, 5, 15], [0, 8, 15], [5, 11, 15]]} /></Tool>
              </ToolRow>
            </Stack>
            <FullSep $l={5} $r={7} />
            <Stack>
              <ToolRow>
                <Tool $w={22}><OrientIcon /></Tool>
                <CaretBox><Caret /></CaretBox>
              </ToolRow>
              <ToolRow>
                <Tool $w={20}><IndentIcon rev /></Tool>
                <Tool $w={20} $ml={2}><IndentIcon /></Tool>
              </ToolRow>
            </Stack>
            <FullSep $l={3} $r={7} />
            <Stack>
              <ToolRow><TextBtn><WrapIcon /><BtnText>Wrap Text</BtnText></TextBtn></ToolRow>
              <ToolRow><TextBtn><MergeIcon /><BtnText>Merge &amp; Center</BtnText><Caret $ml={3} /></TextBtn></ToolRow>
            </Stack>
          </GroupBody>
          <GroupLabel>Alignment</GroupLabel>
          <Launcher>{launcher}</Launcher>
        </Group>

        <Group $w={144}>
          <GroupBody $pl={6}>
            <Stack>
              <ToolRow><Select $w={134}>General<Caret /></Select></ToolRow>
              <ToolRow>
                <Tool $w={24}><CurrencyIcon /></Tool>
                <CaretBox><Caret /></CaretBox>
                <Tool $w={26}><Letter $s={14}>%</Letter></Tool>
                <Tool $w={22}><Letter $b $s={15}>,</Letter></Tool>
                <RowSep $l={3} $r={6} />
                <Tool $w={24}><DecimalIcon inc /></Tool>
                <Tool $w={24}><DecimalIcon /></Tool>
              </ToolRow>
            </Stack>
          </GroupBody>
          <GroupLabel>Number</GroupLabel>
          <Launcher>{launcher}</Launcher>
        </Group>

        <Group $w={175}>
          <GroupBody $pl={3}>
            <BigBtn $w={72}>
              <BigIcon><CondIcon /></BigIcon>
              Conditional
              <span>Formatting <Caret /></span>
            </BigBtn>
            <BigBtn $w={52}>
              <BigIcon><TableIcon /></BigIcon>
              Format
              <span>as Table <Caret /></span>
            </BigBtn>
            <BigBtn $w={38}>
              <BigIcon><CellStyleIcon /></BigIcon>
              Cell
              <span>Styles <Caret /></span>
            </BigBtn>
          </GroupBody>
          <GroupLabel>Styles</GroupLabel>
        </Group>

        <Group $w={135}>
          <GroupBody $pl={4}>
            <BigBtn $w={42}>
              <BigIcon><InsertIcon /></BigIcon>
              Insert
              <Caret $ml={0} />
            </BigBtn>
            <BigBtn $w={44}>
              <BigIcon><DeleteIcon /></BigIcon>
              Delete
              <Caret />
            </BigBtn>
            <BigBtn $w={38}>
              <BigIcon><FormatIcon /></BigIcon>
              Format
              <Caret />
            </BigBtn>
          </GroupBody>
          <GroupLabel>Cells</GroupLabel>
        </Group>

        <Group $w={177}>
          <GroupBody $pl={8}>
            <SmallCol $w={82}>
              <SmallBtn $gap={3}><Letter $b $s={14}>&nbsp;Σ&nbsp;</Letter><BtnText>AutoSum</BtnText><Caret $ml={2} /></SmallBtn>
              <SmallBtn $gap={5}><FillDown /><BtnText>Fill</BtnText><Caret $ml={2} /></SmallBtn>
              <SmallBtn $gap={4}><EraserIcon /><BtnText>Clear</BtnText><Caret $ml={2} /></SmallBtn>
            </SmallCol>
            <BigBtn $w={40}>
              <BigIcon><SortIcon /></BigIcon>
              Sort &amp;
              <span>Filter <Caret /></span>
            </BigBtn>
            <BigBtn $w={42}>
              <BigIcon><BinocularsIcon /></BigIcon>
              Find &amp;
              <span>Select <Caret /></span>
            </BigBtn>
          </GroupBody>
          <GroupLabel>Editing</GroupLabel>
        </Group>
      </Ribbon>
      <RibbonGap />

      <FormulaBar>
        <FormulaMain>
          <NamePanel>
            <NameTop>
              <NameBox>K5<Caret /></NameBox>
              <Grip><GripDot />fx</Grip>
            </NameTop>
          </NamePanel>
          <FormulaInput />
          <FormulaScroll>
            <ScrollTop>
              <Svg w={9} h={6}><path d="M1 5l3.500-3.500L8 5" stroke="#444" strokeWidth="1.800" /></Svg>
            </ScrollTop>
            <ScrollPair>
              <Svg w={9} h={5}><path d="M0 5l4.500-5L9 5z" fill="#8f9399" /></Svg>
              <Svg w={9} h={5}><path d="M0 0l4.500 5L9 0z" fill="#8f9399" /></Svg>
            </ScrollPair>
          </FormulaScroll>
        </FormulaMain>
        <FormulaEdge />
      </FormulaBar>

      <ColHeaders>
        <Corner $w={26}><Svg w={13} h={13}><path d="M13 0v13H0z" fill="#b4b8be" /></Svg></Corner>
        {headers.map(([name, w, kind]) => (
          <ColHead key={name} $w={w} $on={kind === 'on'} $dark={kind === 'dark'}>{name}</ColHead>
        ))}
        <ColHead $fill />
      </ColHeaders>

      <Sheet>
        <SheetRow $h={43}>
          <RowHead $pb={7}>1</RowHead>
          <Cell $w={308} $left $bg={SKY}>
            <BlueTitle $s={28} $b $pl={4} $pb={5}>"X" IPO</BlueTitle>
          </Cell>
          <Cell $w={757} $freeze $bg={SKY} />
          <DeadArea />
        </SheetRow>
        <SheetRow $h={31}>
          <RowHead $pb={3}>2</RowHead>
          <Cell $w={308} $left $bg={SKY}>
            <BlueTitle $s={21} $pl={4} $pb={3}>Debt Schedule</BlueTitle>
          </Cell>
          <Cell $w={757} $freeze $bg={SKY} />
          <DeadArea />
        </SheetRow>
        <SheetRow $h={26}>
          <RowHead>3</RowHead>
          <Cell $w={308} />
          <Cell $w={757} $freeze />
          <DeadArea />
        </SheetRow>
        <SheetRow $h={22}>
          <RowHead $pb={3}>4</RowHead>
          <Cell $w={308} $line="1px solid #777" />
          {colNames.map((col) => (
            <Cell
              key={col}
              $w={widths[col]}
              $b
              $freeze={col === 'C'}
              $pr={col === 'C' ? 3 : col === 'J' ? 3 : 2}
              $line={col === 'K' ? '1px solid #777' : '2px solid #000'}
            >
              {dates[col]}
            </Cell>
          ))}
          <DeadArea $line="1px solid #555" />
        </SheetRow>
        {rows.map((row) => <DataRow key={row.n} row={row} />)}
      </Sheet>

      <SheetTabs>
        <TabNav>
          <NavEnd />
          <NavArrow />
          <NavArrow $right />
          <NavEnd $right />
        </TabNav>
        {sheetTabs.map(([name, w, on, pl]) => <SheetTab key={name} $w={w} $on={on} $pl={pl}>{name}</SheetTab>)}
        <TabEnd />
        <TabRest />
      </SheetTabs>

      <StatusBar>
        <StatusItem $w={49}>Ready</StatusItem>
        <StatusItem $w={35}><MacroIcon /></StatusItem>
        <StatusRight>
          <ViewBtn $w={19} $on><NormalView /></ViewBtn>
          <ViewBtn $w={22}><LayoutView /></ViewBtn>
          <ViewBtn $w={16}><BreakView /></ViewBtn>
          <ZoomText>100%</ZoomText>
          <ZoomRound><Minus size={10} strokeWidth={3} /></ZoomRound>
          <ZoomTrack><ZoomThumb /></ZoomTrack>
          <ZoomRound><Plus size={10} strokeWidth={3} /></ZoomRound>
          <StatusEnd />
        </StatusRight>
      </StatusBar>

      <Taskbar>
        <StartBtn><WindowsLogo /></StartBtn>
        <SearchBox>
          <CortanaRing />
          <SearchText>Type here to search</SearchText>
          <Mic size={17} strokeWidth={1.2} />
        </SearchBox>
        <TaskBtn><TaskView /></TaskBtn>
        <TaskBtn><FolderIcon /></TaskBtn>
        <TaskBtn><EdgeIcon /></TaskBtn>
        <TaskBtn $on $under $w={49}><ExcelLogo s={24} /></TaskBtn>
        <TaskBtn><MailBird /></TaskBtn>
        <TaskBtn $under><ChromeIcon /></TaskBtn>
        <TaskBtn><IeIcon /></TaskBtn>
        <TaskBtn $under><PaletteIcon /></TaskBtn>
        <Tray>
          <PulseDot><Pulse /></PulseDot>
          <TrayIcon $w={24}><PeopleIcon /></TrayIcon>
          <TrayIcon $w={12} />
          <TrayIcon $w={24}><ChevronUp size={16} strokeWidth={1.2} /></TrayIcon>
          <TrayIcon $w={24}><PlugBattery /></TrayIcon>
          <TrayIcon $w={24}><DropboxIcon /></TrayIcon>
          <TrayIcon $w={24}><Wifi size={15} strokeWidth={1.4} /></TrayIcon>
          <TrayIcon $w={22}><Volume1 size={16} strokeWidth={1.2} /></TrayIcon>
          <TrayText $w={38}>ENG<br />IN</TrayText>
          <TrayText $w={72}>12:14<br />27-05-2020</TrayText>
          <TrayIcon $w={4} />
        </Tray>
      </Taskbar>
    </Page>
  );
}
